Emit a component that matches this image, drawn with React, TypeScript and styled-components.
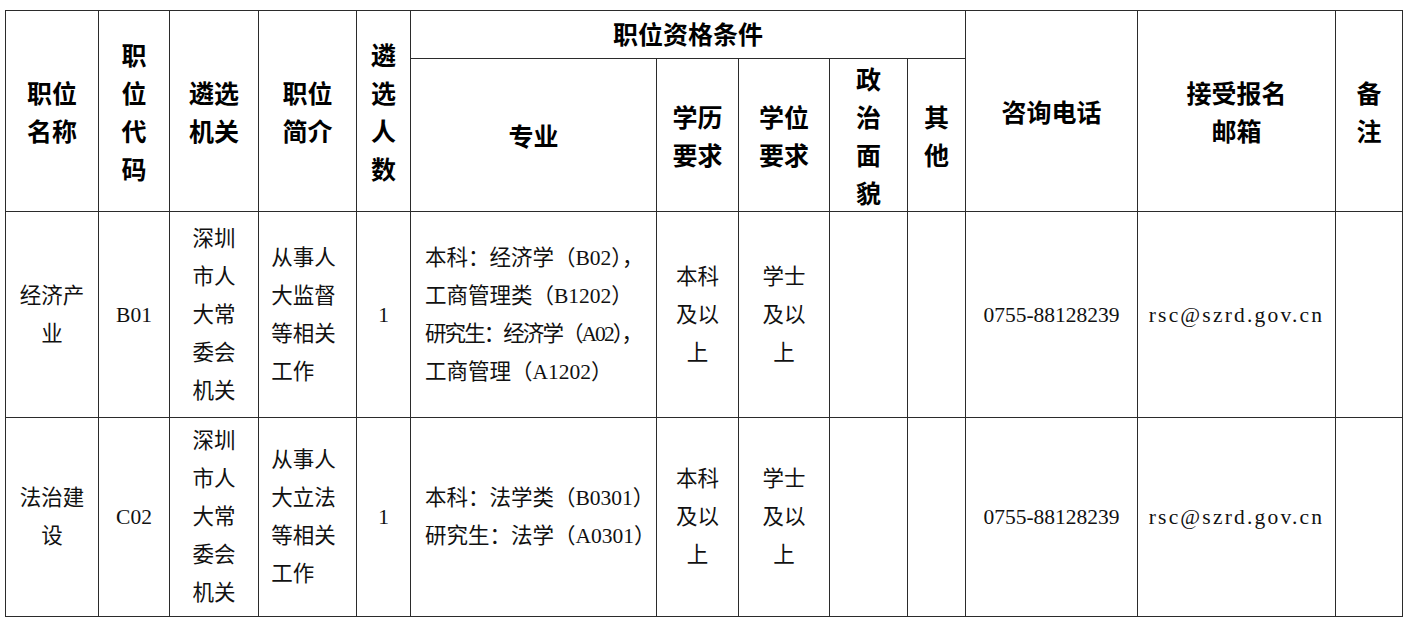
import React from "react";
import styled, { createGlobalStyle } from "styled-components";

const GlobalStyle = createGlobalStyle`
    html, body {
        margin: 0;
        padding: 0;
        background: #ffffff;
    }
`;

type Job = {
    name: string[];
    code: string;
    org: string[];
    intro: string[];
    count: string;
    major: { text: string; tight?: boolean }[];
    edu: string[];
    degree: string[];
    phone: string;
    email: string;
};

const jobs: Job[] = [
    {
        name: ["经济产", "业"],
        code: "B01",
        org: ["深圳", "市人", "大常", "委会", "机关"],
        intro: ["从事人", "大监督", "等相关", "工作"],
        count: "1",
        major: [
            { text: "本科：经济学（B02），" },
            { text: "工商管理类（B1202）" },
            { text: "研究生：经济学（A02），", tight: true },
            { text: "工商管理（A1202）" },
        ],
        edu: ["本科", "及以", "上"],
        degree: ["学士", "及以", "上"],
        phone: "0755-88128239",
        email: "rsc@szrd.gov.cn",
    },
    {
        name: ["法治建", "设"],
        code: "C02",
        org: ["深圳", "市人", "大常", "委会", "机关"],
        intro: ["从事人", "大立法", "等相关", "工作"],
        count: "1",
        major: [
            { text: "本科：法学类（B0301）" },
            { text: "研究生：法学（A0301）" },
        ],
        edu: ["本科", "及以", "上"],
        degree: ["学士", "及以", "上"],
        phone: "0755-88128239",
        email: "rsc@szrd.gov.cn",
    },
];

const colWidths = [93, 71, 89, 98, 54, 246, 82, 91, 78, 58, 172, 198, 67];
const rowHeights = [206, 199];

const Lines: React.FC<{ items: string[] }> = ({ items }) => (
    <>
        {items.map((t, i) => (
            <Line key={i}>{t}</Line>
        ))}
    </>
);

export default function App() {
    return (
        <Page>
            <GlobalStyle />
            <Table>
                <colgroup>
                    {colWidths.map((w, i) => (
                        <col key={i} style={{ width: w }} />
                    ))}
                </colgroup>
                <thead>
                    <HeadRow $h={48}>
                        <HeadCell rowSpan={2}><Lines items={["职位", "名称"]} /></HeadCell>
                        <HeadCell rowSpan={2}><Lines items={["职", "位", "代", "码"]} /></HeadCell>
                        <HeadCell rowSpan={2}><Lines items={["遴选", "机关"]} /></HeadCell>
                        <HeadCell rowSpan={2}><Lines items={["职位", "简介"]} /></HeadCell>
                        <HeadCell rowSpan={2}><Lines items={["遴", "选", "人", "数"]} /></HeadCell>
                        <HeadCell colSpan={5} $raise>职位资格条件</HeadCell>
                        <HeadCell rowSpan={2}>咨询电话</HeadCell>
                        <HeadCell rowSpan={2}><Lines items={["接受报名", "邮箱"]} /></HeadCell>
                        <HeadCell rowSpan={2}><Lines items={["备", "注"]} /></HeadCell>
                    </HeadRow>
                    <HeadRow $h={153}>
                        <HeadCell>专业</HeadCell>
                        <HeadCell><Lines items={["学历", "要求"]} /></HeadCell>
                        <HeadCell><Lines items={["学位", "要求"]} /></HeadCell>
                        <HeadCell><Lines items={["政", "治", "面", "貌"]} /></HeadCell>
                        <HeadCell><Lines items={["其", "他"]} /></HeadCell>
                    </HeadRow>
                </thead>
                <tbody>
                    {jobs.map((job, r) => (
                        <BodyRow key={job.code} $h={rowHeights[r]}>
                            <Cell><Lines items={job.name} /></Cell>
                            <Cell>{job.code}</Cell>
                            <Cell><Lines items={job.org} /></Cell>
                            <Cell>
                                <LeftBlock><Lines items={job.intro} /></LeftBlock>
                            </Cell>
                            <Cell>{job.count}</Cell>
                            <Cell $left>
                                {job.major.map((m, i) => (
                                    <MajorLine key={i} $tight={m.tight}>{m.text}</MajorLine>
                                ))}
                            </Cell>
                            <Cell><Lines items={job.edu} /></Cell>
                            <Cell><Lines items={job.degree} /></Cell>
                            <Cell />
                            <Cell />
                            <Cell>{job.phone}</Cell>
                            <Cell><Email>{job.email}</Email></Cell>
                            <Cell />
                        </BodyRow>
                    ))}
                </tbody>
            </Table>
        </Page>
    );
}

const Page = styled.div`
    padding: 10px 0 0 5px;
    width: 1408px;
    height: 623px;
    box-sizing: border-box;
    overflow: hidden;
`;

const Table = styled.table`
    width: 1397px;
    table-layout: fixed;
    border-collapse: collapse;
    color: #111111;
`;

const HeadRow = styled.tr<{ $h: number }>`
    height: ${(p) => p.$h}px;
`;

const BodyRow = styled.tr<{ $h: number }>`
    height: ${(p) => p.$h}px;
`;

const HeadCell = styled.th<{ $raise?: boolean }>`
    border: 1.5px solid #2b2b2b;
    padding: ${(p) => (p.$raise ? "0 0 4px" : "0")};
    text-align: center;
    vertical-align: middle;
    font-family: "Noto Sans CJK SC", "Noto Sans", sans-serif;
    font-weight: 700;
    font-size: 25px;
    line-height: 38px;
    color: #000000;
    white-space: nowrap;
`;

const Cell = styled.td<{ $left?: boolean }>`
    border: 1.5px solid #2b2b2b;
    padding: ${(p) => (p.$left ? "0 0 0 14px" : "0")};
    text-align: ${(p) => (p.$left ? "left" : "center")};
    vertical-align: middle;
    font-family: "Liberation Serif", "Noto Sans CJK SC", serif;
    font-weight: 400;
    font-size: 21.5px;
    line-height: 38px;
    white-space: nowrap;
    overflow: hidden;
`;

const Line = styled.div`
    display: block;
`;

const LeftBlock = styled.div`
    display: inline-block;
    text-align: left;
    margin-right: 8px;
`;

const MajorLine = styled.div<{ $tight?: boolean }>`
    display: block;
    letter-spacing: ${(p) => (p.$tight ? "-0.09em" : "0")};
`;

const Email = styled.span`
    letter-spacing: 2.2px;
`;
